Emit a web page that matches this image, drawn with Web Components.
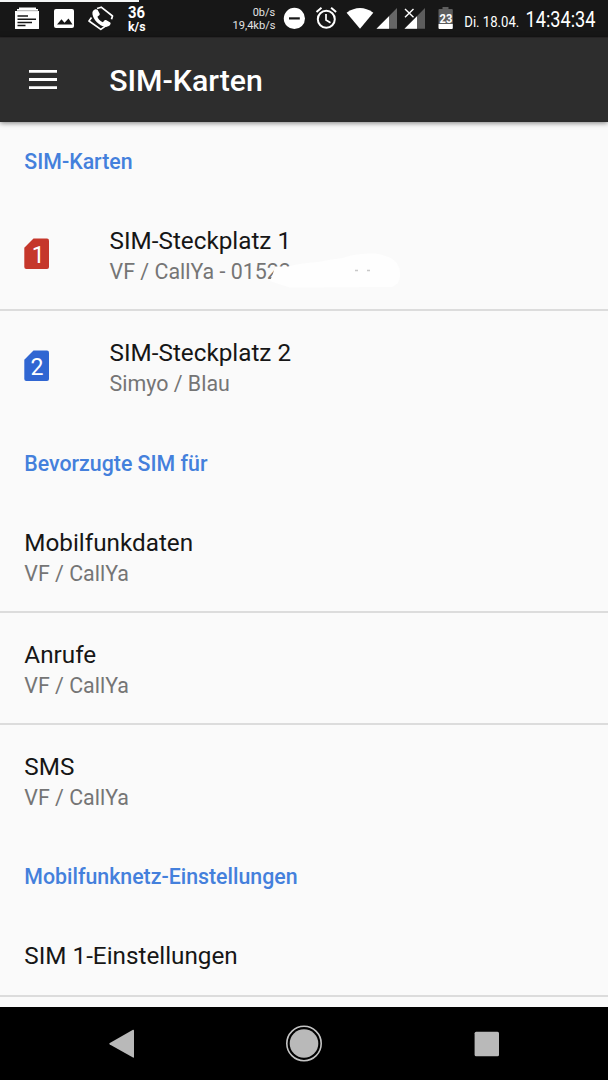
<!DOCTYPE html>
<html lang="de">
<head>
<meta charset="utf-8">
<title>SIM-Karten</title>
<style>
html,body{margin:0;height:1080px;overflow:hidden;background:#fafafa;font-family:Roboto,"Liberation Sans",sans-serif}
</style>
</head>
<body>
<phone-screen></phone-screen>
<script>
const define = (name, html, setup) => {
  const t = document.createElement('template');
  t.innerHTML = html;
  customElements.define(name, class extends HTMLElement {
    constructor() {
      super();
      this.attachShadow({mode: 'open'}).append(t.content.cloneNode(true));
    }
    connectedCallback() { if (setup) setup(this, this.shadowRoot); }
  });
};

define('status-bar', `
<style>
:host{display:flex;height:37px;background:#171717;position:relative;color:#fff}
svg{display:block;flex:none;height:37px;font-family:Roboto,sans-serif;fill:#fff;overflow:visible}
.edge{position:absolute;left:0;top:0;width:139px;height:1.5px;background:#f4f6f6}
.spacer{flex:1}
</style>
<div class="edge"></div>
<svg style="margin-left:14px" width="26" viewBox="14 0 26 37"><path d="M19 7.5h17v1.6h2v2h1v17.300q0 .6-.6.6H15.600q-.6 0-.6-.6V11h2V9.100h2z"/><path d="M17 10.700h21" stroke="#777" stroke-width=".6"/><path d="M17.500 16h10.500M17.500 19.300h18.500M17.500 22.500h14.500M17.500 25.600h8" stroke="#171717" stroke-width="1.500"/></svg>
<svg style="margin-left:13px" width="22" viewBox="53 0 22 37"><rect x="54" y="9" width="20" height="19" rx="2"/><path d="M57 24.500l4.500-5.300 3 3.500 4-4.200 4 6z" fill="#171717"/></svg>
<svg style="margin-left:12px" width="28" viewBox="87 0 28 37"><g fill="none" stroke="#fff" stroke-width="1.700" stroke-linejoin="round"><path d="M97 8.500l4.200-1.300 11.300 8.800-1 3.200"/><path d="M91.500 17.500l-2.500 3.500 11.800 8.400 5.700-4"/></g><path d="M95.300 9.300c-2 .5-3.300 2.500-2.800 5.200 1 5.500 6.500 11.200 12.500 12.300 2.500.4 4.800-.8 5.500-2.700.3-.8 0-1.400-.6-1.800l-3.900-2.200c-.7-.3-1.300-.1-1.700.4l-1.400 1.800c-2.700-1.200-4.600-3.100-5.500-5.600l1.900-1.500c.5-.4.600-1 .3-1.700l-1.900-3.500c-.5-.7-1.400-.9-2.400-.7z"/></svg>
<svg style="margin-left:12px" width="20" viewBox="127 0 20 37" font-weight="700"><text x="128" y="18.300" font-size="16" textLength="17" lengthAdjust="spacingAndGlyphs">36</text><text x="128" y="31" font-size="13.500" textLength="17.500" lengthAdjust="spacingAndGlyphs">k/s</text></svg>
<div class="spacer"></div>
<svg width="46" viewBox="231 0 46 37" font-size="11.500" style="fill:#e4e4e4"><text x="252.700" y="15.800" textLength="22.500" lengthAdjust="spacingAndGlyphs">0b/s</text><text x="232.500" y="28.800" textLength="43" lengthAdjust="spacingAndGlyphs">19,4kb/s</text></svg>
<svg style="margin-left:6px" width="23" viewBox="283 0 23 37"><circle cx="294.400" cy="18.400" r="10.600"/><path d="M289 18.400h10.800" stroke="#171717" stroke-width="2.200"/></svg>
<svg style="margin-left:9px" width="23" viewBox="315 0 23 37"><g fill="none" stroke="#fff"><circle cx="326.300" cy="19.300" r="8.500" stroke-width="2"/><path d="M326 14v6l4.500 2.700" stroke-width="1.700"/><path d="M316.500 12l5-4.200M336.100 12l-5-4.200" stroke-width="2"/></g></svg>
<svg style="margin-left:8px" width="28" viewBox="346 0 28 37"><path d="M346.600 12.700Q360 3.500 373.300 12.700L360 28.800z"/></svg>
<svg style="margin-left:2px" width="22" viewBox="376 0 22 37"><path d="M376.500 28.800L397 8v20.800z" fill="#666"/><path d="M376.500 28.800L389 16.200v12.600z"/></svg>
<svg style="margin-left:6px" width="22" viewBox="404 0 22 37"><path d="M404.500 28.800L425 8v20.800z" fill="#5c5c5c"/><path d="M404.500 28.800L417 16.200v12.600z"/><path d="M405 9l9 8.800M414 9l-9 8.800" stroke="#171717" stroke-width="3"/><path d="M405 9l8.500 8.300M413.500 9l-8.500 8.300" stroke="#fff" stroke-width="1.400"/></svg>
<svg style="margin-left:11px" width="18" viewBox="437 0 18 37"><path d="M442.500 7h6v2h3.300q1 0 1 1v14h-14.300V10q0-1 1-1h3z" fill="#5e5e5e"/><path d="M438.500 24h14.300v4q0 1-1 1h-12.300q-1 0-1-1z"/><text x="439.500" y="23" font-size="12" font-weight="700" textLength="12.800" lengthAdjust="spacingAndGlyphs">23</text></svg>
<svg style="margin-left:8px;margin-right:11px" width="134" viewBox="463 0 134 37" fill="#fff"><text x="464.300" y="26.600" font-size="15.500" textLength="55" lengthAdjust="spacingAndGlyphs">Di. 18.04.</text><text x="525.500" y="26.600" font-size="21.300" textLength="70" lengthAdjust="spacingAndGlyphs">14:34:34</text></svg>
`);

define('app-bar', `
<style>
:host{display:flex;align-items:center;box-sizing:border-box;height:84.500px;padding-left:28.500px;background:#2d2d2d;border-top:1px solid #262425;color:#fff;box-shadow:0 1px 5px rgba(0,0,0,.5);position:relative;z-index:1}
h1{margin:2px 0 0 52.700px;font-size:30.250px;line-height:36px;font-weight:500;white-space:nowrap}
svg{display:block}
</style>
<svg width="28" height="20" viewBox="0 0 28 20"><path d="M0 1.400h28M0 9.500h28M0 17.600h28" stroke="#fff" stroke-width="2.800"/></svg>
<h1><slot></slot></h1>`);

define('section-header', `
<style>
:host{display:block;box-sizing:border-box;height:78px;padding:28px 24.300px 0;color:#4480dc;font-size:21.330px;line-height:28px;font-weight:500}
:host([first]){height:76.500px;padding-top:26px}
:host([last]){height:76px;padding-top:27px}
</style><slot></slot>`);

define('pref-row', `
<style>
:host{display:flex;box-sizing:border-box;height:112px;padding:28px 24.300px 0;position:relative}
:host([compact]){height:84px;padding-top:29px}
:host([divider])::after{content:"";position:absolute;left:0;right:0;bottom:-1px;height:2px;background:#dcdcdc}
.icon{flex:none}
:host([icon]) .icon{width:85.300px;padding-top:12px;box-sizing:border-box}
.title{font-size:24.270px;line-height:30px;color:#161616;white-space:nowrap}
.sub{font-size:21.400px;line-height:28px;margin-top:2px;color:#757575;white-space:nowrap}
</style>
<div class="icon"><slot name="icon"></slot></div>
<div><div class="title"><slot></slot></div><div class="sub"><slot name="sub"></slot></div></div>
<slot name="cover"></slot>`);

define('sim-icon', `
<style>
:host{display:block}
svg{display:block}
text{font:24px Roboto,sans-serif;fill:#fff}
</style>
<svg width="26" height="32" viewBox="0 0 26 32"><path d="M9.500.5H23q2 0 2 2v26.500q0 2-2 2H2.300q-2 0-2-2V9.700z"/><text y="24.700" textLength="13" lengthAdjust="spacingAndGlyphs"></text></svg>`,
(el, root) => {
  root.querySelector('path').setAttribute('fill', el.getAttribute('color'));
  const text = root.querySelector('text');
  text.setAttribute('x', el.getAttribute('number') === '1' ? 7.800 : 6.400);
  text.textContent = el.getAttribute('number');
});

define('scribble-cover', `
<style>
:host{display:block;position:absolute;left:260px;top:50px}
svg{display:block}
</style>
<svg width="144" height="44" viewBox="260 248 144 44"><path d="M275 266.500L288 266.500Q300 263 318 262Q332 259 343 258Q355 253 375 253.500Q400 257 400 273Q401 284 392 287L290 287.500Q276 283 270 281Q273 275 275 266.500z" fill="#fefefe"/><path d="M355 270.500h3M367 270.500h3" stroke="#c8c8c8" stroke-width="1.300"/></svg>`);

define('nav-bar', `
<style>
:host{display:flex;align-items:center;box-sizing:border-box;height:73px;background:#000;padding:0 108px;justify-content:space-between}
svg{display:block;fill:#b9b9b9}
</style>
<svg width="28" height="32" viewBox="0 0 28 32"><path d="M25 1.700Q26 1.500 26 2.500v26.500q0 1-1 .6L1.800 16.500q-1.200-.8 0-1.600z"/></svg>
<svg width="38" height="38" viewBox="0 0 38 38"><circle cx="18" cy="18.500" r="17.200" fill="none" stroke="#c4c4c4" stroke-width="1.600"/><circle cx="18" cy="18.500" r="14.300"/></svg>
<svg width="26" height="26" viewBox="0 0 26 26"><rect x=".6" y=".8" width="24.400" height="24.400" rx="1.500"/></svg>`);

define('phone-screen', `
<style>
:host{display:flex;flex-direction:column;width:608px;height:1080px;background:#fafafa;overflow:hidden}
main{flex:1;min-height:0;overflow:hidden}
status-bar,app-bar,nav-bar{flex:none}
</style>
<status-bar></status-bar>
<app-bar>SIM-Karten</app-bar>
<main>
<section-header first>SIM-Karten</section-header>
<pref-row icon divider><sim-icon slot="icon" color="#c5372b" number="1"></sim-icon>SIM-Steckplatz 1<span slot="sub">VF / CallYa - 01522</span><scribble-cover slot="cover"></scribble-cover></pref-row>
<pref-row icon><sim-icon slot="icon" color="#3066d2" number="2"></sim-icon>SIM-Steckplatz 2<span slot="sub">Simyo / Blau</span></pref-row>
<section-header>Bevorzugte SIM für</section-header>
<pref-row divider>Mobilfunkdaten<span slot="sub">VF / CallYa</span></pref-row>
<pref-row divider>Anrufe<span slot="sub">VF / CallYa</span></pref-row>
<pref-row>SMS<span slot="sub">VF / CallYa</span></pref-row>
<section-header last>Mobilfunknetz-Einstellungen</section-header>
<pref-row compact divider>SIM 1-Einstellungen</pref-row>
</main>
<nav-bar></nav-bar>`);
</script>
</body>
</html>
